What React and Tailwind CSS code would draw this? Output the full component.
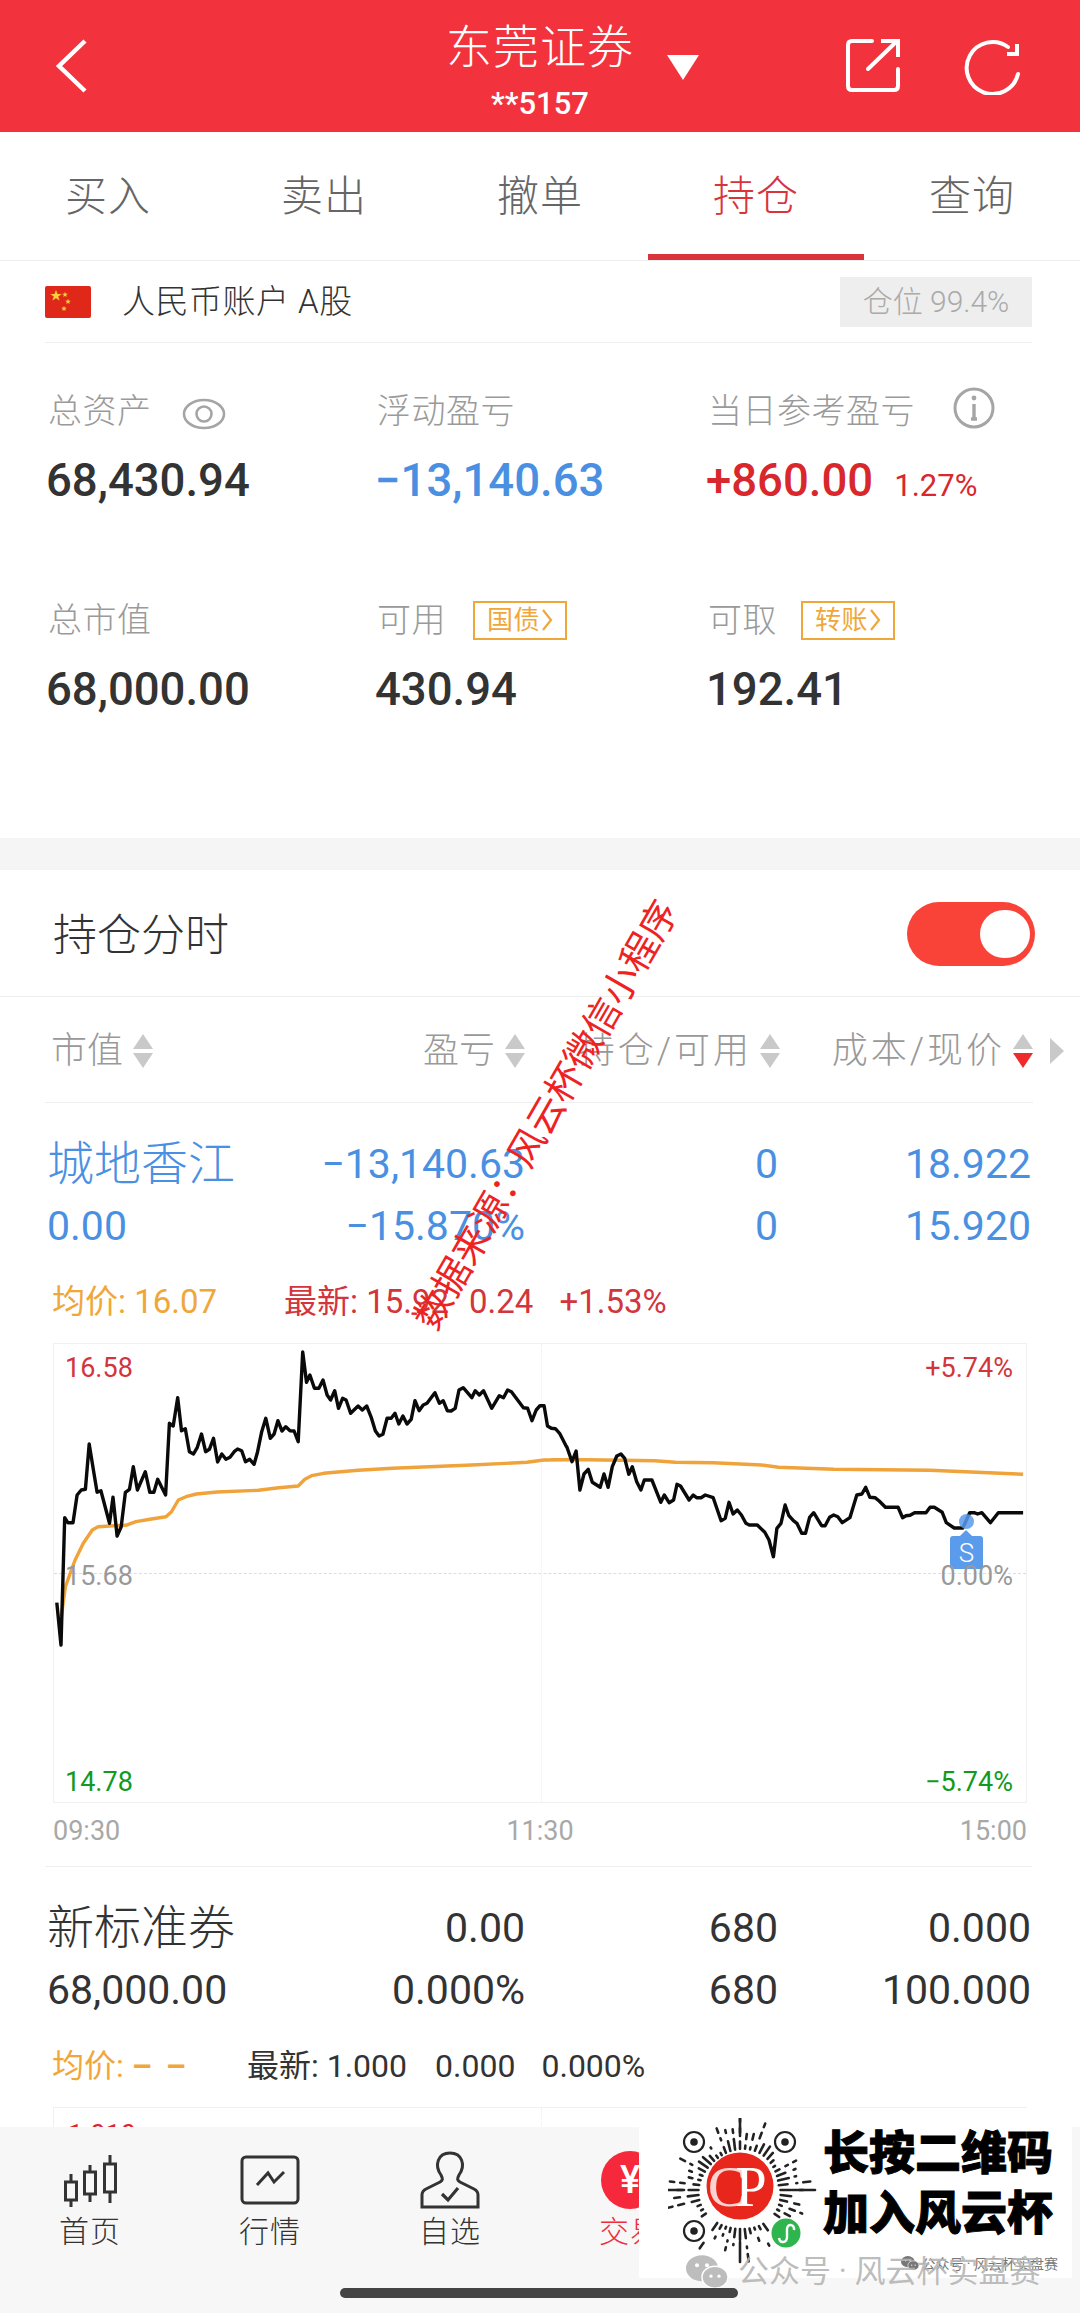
const L1=[75,818,87,945,98,563,107,578,122,578,134,495,146,480,158,478,169,342,182,425,192,487,203,482,228,580,238,502,250,618,262,590,274,487,286,478,297,410,309,480,332,425,345,487,357,487,368,448,391,495,402,280,413,288,426,203,437,302,448,296,460,365,472,372,483,352,495,312,507,365,518,358,530,325,542,396,554,372,566,388,578,382,590,365,600,357,612,362,623,395,635,388,648,403,658,365,670,305,682,265,695,325,706,312,717,272,729,303,740,290,752,302,764,303,776,335,789,66,800,157,810,135,823,175,836,175,848,150,860,195,870,210,882,182,893,235,905,205,915,210,928,250,950,228,962,240,975,228,988,262,1000,303,1011,318,1022,313,1034,265,1046,265,1057,250,1068,282,1080,258,1092,282,1104,268,1115,212,1127,242,1139,225,1150,220,1173,188,1186,220,1197,212,1209,242,1220,243,1232,235,1243,180,1255,173,1280,203,1290,182,1302,195,1314,182,1338,235,1360,197,1372,203,1384,180,1395,185,1430,233,1442,235,1455,272,1467,240,1478,227,1490,227,1500,288,1511,295,1523,296,1535,310,1555,350];
const L2=[75,350,90,395,102,363,113,480,125,432,137,418,149,457,172,472,183,432,195,472,207,410,220,378,232,372,243,385,255,433,265,410,278,455,290,480,300,450,322,450,348,517,358,495,372,518,385,510,395,463,405,468,430,510,442,495,452,503,465,503,477,495,500,503,523,572,535,565,546,517,558,552,570,540,582,555,595,580,605,585,628,585,650,607,662,630,675,680,685,595,697,580,709,525,720,557,733,572,743,580,757,610,768,610,780,562,792,548,815,587,825,587,838,562,850,555,862,560,875,578,897,563,917,495,932,492,943,472,955,502,970,503,982,513,1000,532,1037,532,1050,563,1060,557,1072,556,1085,548,1118,548,1130,532,1142,532,1165,547,1177,578,1200,594,1225,594,1245,548,1258,548,1268,552,1280,548,1305,578,1328,548,1400,548];
const O1=[88,860,100,770,112,735,128,690,152,640,178,600,195,590,240,587,275,586,305,575,350,567,392,560,408,545,428,510,450,500,480,492,540,486,660,481,720,473,776,468,795,448,815,437,850,430,950,421,1050,415,1280,405,1440,397,1490,390,1568,389];
const O2=[30,389,130,389,330,392,390,397,500,398,640,405,690,412,850,418,1130,421,1300,428,1400,433];
const conv=(a,ox)=>{const r=[];for(let i=0;i<a.length;i+=2){r.push(((a[i]/2.904+ox-53).toFixed(1))+','+((a[i+1]/3+1330-1344).toFixed(1)));}return r;};
const blackPts=[...conv(L1,30),...conv(L2,540)].join(' ');
const orangePts=[...conv(O1,30),...conv(O2,540)].join(' ');

const Updown=({hot,className=''})=>(
  <svg width="20" height="34" viewBox="0 0 20 34" className={className}>
    <path d="M10 0 L20 15 H0Z" fill="#c9c9c9"/>
    <path d="M0 19 H20 L10 34Z" fill={hot?'#ee2a2a':'#c9c9c9'}/>
  </svg>
);

function Tag({children,className}){return(
  <span className={`inline-flex h-[39px] w-[94px] items-center justify-center gap-[1px] border-2 border-[#f0a73a] text-[26px] font-normal text-[#f0a73a] ${className}`}>{children}
    <svg width="12" height="24" viewBox="0 0 12 24"><path d="M2 2 L10 12 L2 22" fill="none" stroke="#f0a73a" strokeWidth="2.2"/></svg>
  </span>);}

function Stat({label,extra,value,color='text-[#333333]',sub}){return(
  <div className="flex h-[209px] flex-col">
    <div className="flex h-[40px] items-center pl-[2px] text-[34px] font-light tracking-[0.5px] text-[#9a9a9a]">{label}{extra}</div>
    <div className={`mt-[22px] flex h-[56px] items-baseline text-[45.5px] font-medium leading-[56px] ${color}`}>{value}{sub&&<span className="ml-[21px] text-[31px] font-normal">{sub}</span>}</div>
  </div>);}

function Row({a,b,c,d,color,aClass='text-[41px]'}){return(
  <div className={`grid h-[65px] grid-cols-[250px_228px_253px_253px] items-center text-[41px] ${color}`}>
    <div className={aClass}>{a}</div>
    <div className="text-right">{b}</div>
    <div className="text-right">{c}</div>
    <div className="text-right">{d}</div>
  </div>);}

function Qr(){
  const C=72, dashes=[];
  const targets=[[26,24],[117,24],[26,113],[118,115]];
  const clear=(x,y)=>targets.every(([a,b])=>Math.hypot(x-a,y-b)>15);
  const add=(k,t,r1,r2)=>{
    const x1=C+r1*Math.cos(t),y1=C+r1*Math.sin(t),x2=C+r2*Math.cos(t),y2=C+r2*Math.sin(t);
    if(!clear(x1,y1)||!clear(x2,y2))return;
    dashes.push(<line key={k} x1={x1} y1={y1} x2={x2} y2={y2} stroke="#222" strokeWidth="2.6" strokeLinecap="round"/>);
  };
  for(let i=0;i<52;i++){
    const t=i*(360/52)*Math.PI/180;
    const s=(Math.sin(i*12.9)+1)/2, s2=(Math.sin(i*7.3+1)+1)/2, s3=(Math.sin(i*3.7+2)+1)/2;
    const r1=39+s*3, r2=r1+2+s2*9;
    add('a'+i,t,r1,r2);
    const r3=r2+6+s3*3, r4=r3+1+s*5;
    if(i%2===0||s3>.6) add('b'+i,t,r3,r4);
    const r5=r4+6, r6=r5+1+s2*8;
    if(i%3===0&&r6<77) add('c'+i,t,r5,r6);
  }
  add('l1',Math.PI,56,75);add('l2',0,52,75);add('l3',-Math.PI/2,54,74);add('l4',Math.PI/2,52,72);
  const Target=({x,y})=>(<g><circle cx={x} cy={y} r="10" fill="#fff" stroke="#222" strokeWidth="2.2"/><circle cx={x} cy={y} r="3.8" fill="#222"/></g>);
  return(
    <svg width="152" height="152" viewBox="0 0 152 152" className="shrink-0">
      {dashes}
      <Target x="26" y="24"/><Target x="117" y="24"/><Target x="26" y="113"/>
      <circle cx="72" cy="68" r="33.5" fill="#e8261c"/>
      <text x="59" y="88" fontFamily="Liberation Serif" fontSize="58" fill="#fff" fillOpacity=".8" textAnchor="middle">C</text>
      <text x="59" y="76" fontFamily="Noto Sans CJK SC" fontSize="15" fill="#e8261c" stroke="#e8261c" strokeWidth=".3" textAnchor="middle">风</text>
      <text x="83" y="88" fontFamily="Liberation Serif" fontSize="56" fill="#fff" textAnchor="middle">P</text>
      <circle cx="118" cy="115" r="14.5" fill="#2fb54d"/>
      <path d="M111 120 c1 6 8 5 8 -1 l0 -8 c0 -6 8 -5 7 1" fill="none" stroke="#fff" strokeWidth="2.4"/>
    </svg>);
}

const Wechat=({w=42,color='#bdbdbd'})=>(
  <svg width={w} height={w*0.82} viewBox="0 0 42 34">
    <ellipse cx="16" cy="13" rx="16" ry="13" fill={color}/>
    <ellipse cx="29" cy="22" rx="13" ry="11" fill={color} stroke="#fff" strokeWidth="1.5"/>
    <circle cx="11" cy="10" r="2" fill="#fff"/><circle cx="21" cy="10" r="2" fill="#fff"/>
    <circle cx="25" cy="21" r="1.6" fill="#fff"/><circle cx="33" cy="21" r="1.6" fill="#fff"/>
  </svg>);

function NavItem({icon,label,cls='text-[#333333]'}){return(
  <div className="flex w-[180px] flex-col items-center">
    <div className="flex h-[66px] items-center justify-center">{icon}</div>
    <div className={`text-[30px] font-light leading-[38px] tracking-[1px] ${cls}`}>{label}</div>
  </div>);}

export default function App(){
  const tabs=['买入','卖出','撤单','持仓','查询'];
  return(
  <div className="relative flex h-[2313px] w-[1080px] flex-col overflow-hidden bg-white font-[Roboto,'Noto_Sans_CJK_SC',sans-serif] text-[#333333]">
    {/* header */}
    <header className="grid h-[132px] shrink-0 grid-cols-[1fr_auto_1fr] items-center bg-[#f2323c] text-white">
      <div className="pl-[54px]">
        <svg width="36" height="56" viewBox="0 0 36 56"><path d="M31 3 L5 28 L31 53" fill="none" stroke="#fff" strokeWidth="4.5"/></svg>
      </div>
      <div className="relative flex flex-col items-center pt-[10px]">
        <div className="text-[46px] font-light leading-[50px] tracking-[1px]">东莞证券</div>
        <div className="mt-[15px] text-[31px] font-medium leading-[34px]">**5157</div>
        <svg width="32" height="26" viewBox="0 0 32 26" className="absolute left-full top-[42px] ml-[33px]"><path d="M0 1 H32 L16 26Z" fill="#fff"/></svg>
      </div>
      <div className="flex items-center justify-end gap-[61px] pr-[59px]">
        <svg width="56" height="56" viewBox="0 0 56 56" fill="none" stroke="#fff" strokeWidth="4" strokeLinecap="round">
          <path d="M26 3 H6 Q2 3 2 7 V48 Q2 52 6 52 H48 Q52 52 52 48 V31"/>
          <path d="M22 31 L50 4"/><path d="M35 3 H52 V19" strokeLinecap="butt"/>
        </svg>
        <svg width="58" height="58" viewBox="0 0 58 58" fill="none" stroke="#fff" strokeWidth="4" strokeLinecap="round">
          <path d="M55 37 A26 26 0 1 1 45 10"/>
          <path d="M54 7 V17 H44" strokeLinecap="butt"/>
        </svg>
      </div>
    </header>
    {/* tabs */}
    <nav className="grid h-[129px] shrink-0 grid-cols-[216px_216px_216px_216px_216px] border-b border-[#eeeeee]">
      {tabs.map((t,i)=>(
        <div key={t} className={`flex items-center justify-center text-[42px] font-light tracking-[1px] ${i===3?'border-b-[6px] border-[#d9333b] pt-[6px] text-[#d9333b]':'text-[#666666]'}`}>{t}</div>
      ))}
    </nav>
    <main className="relative min-h-0 flex-1 overflow-hidden">
      {/* account */}
      <div className="ml-[45px] mr-[48px] flex h-[82px] items-center justify-between border-b border-[#eeeeee]">
        <div className="flex items-center">
          <div className="relative h-[32px] w-[46px] rounded-[2px] bg-[#e0281a]">
            <span className="absolute left-[5px] top-[4px] text-[12px] leading-[12px] text-[#f7d13c]">★</span>
            <span className="absolute left-[17px] top-[5px] text-[6px] leading-[6px] text-[#f7d13c]">★</span>
            <span className="absolute left-[20px] top-[12px] text-[6px] leading-[6px] text-[#f7d13c]">★</span>
            <span className="absolute left-[16px] top-[19px] text-[6px] leading-[6px] text-[#f7d13c]">★</span>
          </div>
          <span className="ml-[31px] text-[33px] font-light tracking-[0.5px] text-[#333333]">人民币账户 A股</span>
        </div>
        <div className="flex h-[50px] w-[192px] items-center justify-center bg-[#eeeeee] text-[30px] font-light text-[#aaaaaa]">仓位 99.4%</div>
      </div>
      {/* stats */}
      <section className="grid h-[495px] grid-cols-[329px_331px_1fr] content-start pl-[46px] pt-[48px]">
        <Stat label="总资产" extra={
          <svg width="44" height="32" viewBox="0 0 44 32" className="ml-[30px] mt-[6px]" fill="none" stroke="#a5a5a5" strokeWidth="2.6"><ellipse cx="22" cy="16" rx="20" ry="14"/><circle cx="22" cy="16" r="7.5"/></svg>
        } value="68,430.94"/>
        <Stat label="浮动盈亏" value="−13,140.63" color="text-[#4a90e2]"/>
        <Stat label="当日参考盈亏" extra={
          <svg width="42" height="42" viewBox="0 0 42 42" className="ml-[38px] -mt-[6px]" fill="none" stroke="#a5a5a5" strokeWidth="3"><circle cx="21" cy="21" r="19"/><path d="M21 17 V32 M18 32 H24" strokeWidth="3.4"/><circle cx="21" cy="11" r="2.4" fill="#a5a5a5" stroke="none"/></svg>
        } value="+860.00" color="text-[#d9272e]" sub="1.27%"/>
        <Stat label="总市值" value="68,000.00"/>
        <Stat label="可用" extra={<Tag className="ml-[27px]">国债</Tag>} value="430.94"/>
        <Stat label="可取" extra={<Tag className="ml-[24px]">转账</Tag>} value="192.41"/>
      </section>
      <div className="h-[32px] bg-[#f5f5f5]"></div>
      {/* section head */}
      <div className="flex h-[127px] items-center justify-between border-b border-[#eeeeee] pl-[53px] pr-[45px]">
        <span className="pt-[6px] text-[44px] font-light text-[#333333]">持仓分时</span>
        <div className="relative mt-[1px] h-[64px] w-[128px] rounded-full bg-[#fa4338]">
          <div className="absolute right-[5px] top-[8px] h-[48px] w-[50px] rounded-full bg-white"></div>
        </div>
      </div>
      {/* table head */}
      <div className="ml-[45px] mr-[47px] grid h-[106px] grid-cols-[252px_228px_255px_1fr] items-center border-b border-[#eeeeee] pt-[3px] text-[36px] font-light text-[#999999]">
        <div className="flex items-center pl-[6px]">市值<Updown className="ml-[10px]"/></div>
        <div className="flex items-center justify-end">盈亏<Updown className="ml-[10px]"/></div>
        <div className="flex items-center justify-end tracking-[3px]">持仓/可用<Updown className="ml-[8px]"/></div>
        <div className="relative flex items-center justify-end tracking-[3px]">成本/现价<Updown hot className="ml-[8px]"/>
          <svg width="14" height="26" viewBox="0 0 14 26" className="absolute -right-[31px]"><path d="M0 0 L14 13 L0 26Z" fill="#c9c9c9"/></svg>
        </div>
      </div>
      {/* row 1 */}
      <div className="pl-[47px] pt-[26px]">
        <Row a="城地香江" b="−13,140.63" c="0" d="18.922" color="text-[#4a90e2]" aClass="text-[47px] font-light"/>
        <Row a="0.00" b="−15.870%" c="0" d="15.920" color="text-[#4a90e2]"/>
      </div>
      <div className="mt-[23px] flex h-[40px] items-center pl-[52px] text-[33px]">
        <span className="w-[232px] text-[#f0a73a]">均价: 16.07</span>
        <span className="text-[#d2353c]">最新: 15.92</span>
        <span className="ml-[20px] text-[#d2353c]">0.24</span>
        <span className="ml-[26px] text-[#d2353c]">+1.53%</span>
      </div>
      {/* chart */}
      <div className="relative ml-[53px] mt-[21px] h-[460px] w-[974px] border border-[#f0f0f0] text-[27px]">
        <div className="absolute inset-x-0 top-[229px] border-t border-dashed border-[#dddddd]"></div>
        <div className="absolute inset-y-0 left-[487px] border-l border-dotted border-[#eeeeee]"></div>
        <svg width="974" height="460" viewBox="0 0 974 460" className="absolute left-0 top-0" fill="none">
          <polyline points={orangePts} stroke="#f0a33a" strokeWidth="3.4" strokeLinejoin="round"/>
          <polyline points={blackPts} stroke="#0a0a0a" strokeWidth="3.4" strokeLinejoin="round"/>
        </svg>
        <div className="absolute left-[905px] top-[170px] h-[15px] w-[15px] rounded-full bg-[#5b9bec]/85"></div>
        <div className="absolute left-[907px] top-[188px] h-[10px] w-[10px] rotate-45 bg-[#5b9bec]"></div>
        <div className="absolute left-[896px] top-[192px] flex h-[33px] w-[33px] items-center justify-center rounded-[3px] bg-[#5b9bec] text-[26px] font-light leading-none text-white">S</div>
        <span className="absolute left-[11px] top-[4px] text-[#d2353c]">16.58</span>
        <span className="absolute left-[11px] top-[212px] text-[#999999]">15.68</span>
        <span className="absolute bottom-[0px] left-[11px] text-[#119a1e]">14.78</span>
        <span className="absolute right-[13px] top-[4px] text-[#d2353c]">+5.74%</span>
        <span className="absolute right-[13px] top-[212px] text-[#999999]">0.00%</span>
        <span className="absolute bottom-[0px] right-[13px] text-[#119a1e]">−5.74%</span>
      </div>
      <div className="ml-[53px] flex h-[63px] w-[974px] items-center justify-between pb-[6px] text-[27px] text-[#a8a8a8]">
        <span>09:30</span><span>11:30</span><span>15:00</span>
      </div>
      <div className="ml-[45px] mr-[48px] border-b border-[#eeeeee]"></div>
      {/* row 2 */}
      <div className="pl-[47px] pt-[26px]">
        <Row a="新标准券" b="0.00" c="680" d="0.000" color="text-[#333333]" aClass="text-[47px] font-light"/>
        <Row a="68,000.00" b="0.000%" c="680" d="100.000" color="text-[#333333]"/>
      </div>
      <div className="mt-[23px] flex h-[40px] items-center pl-[52px] text-[32px]">
        <span className="w-[195px] text-[#f0a73a]">均价: <b className="tracking-[3px]">– –</b></span>
        <span>最新: 1.000</span>
        <span className="ml-[28px]">0.000</span>
        <span className="ml-[26px]">0.000%</span>
      </div>
      <div className="relative ml-[53px] mt-[21px] h-[60px] w-[974px] border border-[#f0f0f0] text-[27px]">
        <div className="absolute inset-y-0 left-[487px] border-l border-dotted border-[#eeeeee]"></div>
        <span className="absolute left-[14px] top-[7px] text-[#e0242c]">1.010</span>
      </div>
    </main>
    {/* bottom nav */}
    <footer className="flex h-[186px] shrink-0 items-start bg-[#f7f7f7] pt-[20px]">
      <NavItem label="首页" icon={
        <svg width="56" height="56" viewBox="0 0 56 56" fill="none" stroke="#333" strokeWidth="3"><path d="M9 22 V55 M28 13 V50 M48 3 V51"/><rect x="3.5" y="30" width="11" height="18" fill="#f7f7f7"/><rect x="22.5" y="20" width="11" height="22" fill="#f7f7f7"/><rect x="42.5" y="12" width="11" height="28" fill="#f7f7f7"/></svg>
      }/>
      <NavItem label="行情" icon={
        <svg width="60" height="50" viewBox="0 0 60 50" fill="none" stroke="#333"><rect x="2" y="2" width="56" height="46" rx="4" strokeWidth="3"/><path d="M17 30 L28 18 L34 27 L44 17" strokeWidth="3"/></svg>
      }/>
      <NavItem label="自选" icon={
        <svg width="60" height="58" viewBox="0 0 60 58" fill="none" stroke="#333" strokeWidth="3"><path d="M21 24 C14 14 18 2 30 2 C42 2 46 14 39 24 C37 28 37 29 40 31 L54 38 Q58 40 58 44 V56 H2 V44 Q2 40 6 38 L20 31 C23 29 23 28 21 24Z"/><path d="M22 43 L28 49 L38 37" strokeWidth="3.2"/></svg>
      }/>
      <NavItem label="交易" cls="text-[#ef2b3c]" icon={
        <div className="flex h-[58px] w-[58px] items-center justify-center rounded-full bg-[#f5283c] text-[38px] font-medium text-white">¥</div>
      }/>
    </footer>
    {/* QR advert that lies over the page */}
    <div className="absolute left-[639px] top-[2108px] flex h-[170px] w-[433px] items-start bg-white pl-[29px] pt-[10px]">
      <Qr/>
      <div className="ml-[3px] mt-[12px] flex flex-col gap-[14px] text-[46px] font-black leading-[46px] text-black [-webkit-text-stroke:1px_black]">
        <span>长按二维码</span><span>加入风云杯</span>
      </div>
      <div className="absolute bottom-[7px] right-[14px] flex items-center gap-[2px] text-[14px] leading-none text-[#777777]"><Wechat w={18} color="#777"/>公众号 · 风云杯实盘赛</div>
    </div>
    <div className="absolute left-[686px] top-[2254px] flex items-center gap-[10px] text-[31px] leading-[36px] text-[#b4b4b4]/90">
      <Wechat/><span>公众号 · 风云杯实盘赛</span>
    </div>
    <div className="absolute left-[340px] top-[2288px] h-[10px] w-[398px] rounded-full bg-[#444444]"></div>
    {/* red diagonal watermark */}
    <div className="absolute left-[286px] top-[1092px] w-[520px] -rotate-[60deg] whitespace-nowrap text-center text-[37.5px] font-normal leading-[46px] text-[#ee2222]">数据来源：风云杯微信小程序</div>
  </div>);
}
